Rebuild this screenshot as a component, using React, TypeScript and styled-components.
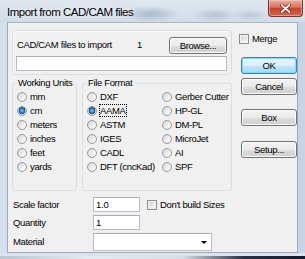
import styled, { createGlobalStyle } from "styled-components";

const GlobalStyle = createGlobalStyle`
  html, body {
    margin: 0;
    padding: 0;
  }
  body {
    width: 305px;
    height: 259px;
    overflow: hidden;
    font-family: "Liberation Sans", Arial, sans-serif;
    color: #000;
  }
  * {
    box-sizing: border-box;
  }
`;

const Window = styled.div`
  width: 305px;
  height: 259px;
  display: flex;
  flex-direction: column;
  background: linear-gradient(90deg, #d6e0eb 0%, #cdd8e5 50%, #c8d4e2 100%);
  overflow: hidden;
`;

const TitleBar = styled.div`
  height: 22px;
  display: flex;
  align-items: flex-start;
  padding-left: 7px;
  background:
    radial-gradient(ellipse 30px 8px at 150px 14px, rgba(120, 140, 165, 0.45), transparent),
    radial-gradient(ellipse 22px 7px at 215px 15px, rgba(130, 145, 165, 0.35), transparent),
    radial-gradient(ellipse 18px 6px at 250px 15px, rgba(130, 145, 165, 0.3), transparent),
    linear-gradient(180deg, #dfe7f0 0%, #d2dce8 100%);
`;

const Title = styled.span`
  font-size: 11.5px;
  letter-spacing: -0.5px;
  line-height: 24px;
  text-shadow: 0 0 5px rgba(255, 255, 255, 0.95);
`;

const CloseButton = styled.div`
  margin-left: auto;
  margin-right: 2px;
  width: 35px;
  height: 17px;
  border: 1px solid #7e3428;
  border-top: none;
  border-radius: 0 0 4px 4px;
  background: linear-gradient(180deg, #eab0a2 0%, #d9745f 45%, #c4432c 52%, #d06a4c 100%);
  box-shadow: inset 0 0 0 1px rgba(255, 220, 210, 0.45);
  display: flex;
  align-items: center;
  justify-content: center;
`;

const Client = styled.div`
  margin: 0 7px;
  height: 231px;
  background: #f0f0f0;
  border: 1px solid #9aa9bc;
  border-top-color: #aab7c6;
  display: grid;
  grid-template-columns: 226px 1fr;
  padding: 7px 0 0 4px;
`;

const BottomEdge = styled.div`
  height: 3px;
  background: #dbe3ec;
`;

const Backdrop = styled.div`
  height: 3px;
  background: linear-gradient(90deg, #b9c5d2 0%, #e6ebf0 30%, #d7dde4 60%, #2a3045 80%, #161a2a 100%);
`;

const MainColumn = styled.div`
  display: flex;
  flex-direction: column;
`;

const SideColumn = styled.div`
  display: flex;
  flex-direction: column;
  align-items: flex-start;
`;

const FilesGroup = styled.div`
  width: 220px;
  height: 45px;
  border: 1px solid #d5dfe5;
  border-radius: 3px;
  box-shadow: inset 1px 1px 0 #fff;
  padding: 6px 4px 0 3px;
`;

const FilesRow = styled.div`
  height: 16px;
  display: flex;
  align-items: center;
`;

const Text = styled.span`
  font-size: 9.5px;
  letter-spacing: -0.35px;
  line-height: 12px;
  white-space: nowrap;
`;

const FilesLabel = styled(Text)`
  width: 120px;
  margin-left: 1px;
`;

const Button = styled.button<{ $primary?: boolean; $width: number }>`
  width: ${(p) => p.$width}px;
  height: 17px;
  padding: 0;
  font-family: inherit;
  font-size: 9.5px;
  letter-spacing: -0.35px;
  color: #000;
  border: 1px solid ${(p) => (p.$primary ? "#3c7fb1" : "#707070")};
  border-radius: 3px;
  background: ${(p) =>
    p.$primary
      ? "linear-gradient(180deg, #eaf6fd 0%, #d9f0fc 50%, #bee6fd 51%, #a7d9f5 100%)"
      : "linear-gradient(180deg, #f2f2f2 0%, #ebebeb 50%, #dddddd 51%, #cfcfcf 100%)"};
  box-shadow: inset 0 0 0 1px ${(p) => (p.$primary ? "#7fdcfc" : "#fcfcfc")};
  display: flex;
  align-items: center;
  justify-content: center;
`;

const BrowseButton = styled(Button)`
  margin-left: auto;
`;

const SideButton = styled(Button)<{ $gap: number }>`
  margin-top: ${(p) => p.$gap}px;
  margin-left: 3px;
`;

const TextBox = styled.div<{ $width: number; $height?: number }>`
  width: ${(p) => p.$width}px;
  height: ${(p) => p.$height ?? 15}px;
  background: #fff;
  border: 1px solid #b4bcc5;
  border-top-color: #abadb3;
  padding-left: 2px;
  display: flex;
  align-items: center;
  font-size: 9.5px;
  letter-spacing: -0.2px;
`;

const PathBox = styled(TextBox)`
  margin-top: 3px;
`;

const GroupsRow = styled.div`
  display: flex;
  gap: 5px;
  margin-top: 2px;
`;

const Group = styled.fieldset<{ $width: number }>`
  margin: 0;
  width: ${(p) => p.$width}px;
  height: 114px;
  padding: 1px 0 0 4px;
  border: 1px solid #d5dfe5;
  border-radius: 3px;
  min-width: 0;
`;

const Legend = styled.legend`
  font-size: 9.5px;
  letter-spacing: -0.35px;
  line-height: 12px;
  padding: 0 1px;
  white-space: nowrap;
`;

const OptionGrid = styled.div<{ $cols: number }>`
  display: grid;
  grid-template-columns: ${(p) => (p.$cols === 2 ? "75px 1fr" : "1fr")};
  grid-template-rows: repeat(6, 14px);
  grid-auto-flow: column;
`;

const Option = styled.div`
  display: flex;
  align-items: center;
  gap: 3px;
`;

const Radio = styled.span<{ $checked?: boolean }>`
  width: 10px;
  height: 10px;
  flex: none;
  border-radius: 50%;
  border: 1px solid #989898;
  background: ${(p) =>
    p.$checked
      ? "radial-gradient(circle at 50% 45%, #7fc6f4 0%, #2a7fcf 35%, #0e4f8e 55%, #e9e9e9 62%, #fafafa 100%)"
      : "linear-gradient(135deg, #d4d4d4 0%, #f0f0f0 60%, #ffffff 100%)"};
`;

const Focused = styled.span`
  outline: 1px dotted #000;
  outline-offset: 0;
`;

const Check = styled.span`
  width: 10px;
  height: 10px;
  flex: none;
  border: 1px solid #8f8f8f;
  background: linear-gradient(135deg, #cfcfcf 0%, #ececec 60%, #ffffff 100%);
  box-shadow: inset 0 0 0 1px #f4f4f4;
`;

const CheckRow = styled.label<{ $offset: number }>`
  display: flex;
  align-items: center;
  gap: 3px;
  margin-left: ${(p) => p.$offset}px;
`;

const MergeRow = styled(CheckRow)`
  margin-top: 3px;
  height: 11px;
`;

const Form = styled.div`
  margin-top: 6px;
  display: flex;
  flex-direction: column;
  gap: 3px;
  padding-left: 1px;
`;

const FormRow = styled.div`
  display: grid;
  grid-template-columns: 80px auto 1fr;
  align-items: center;
`;

const SelectArrow = styled.span`
  margin-left: auto;
  margin-right: 4px;
  width: 0;
  height: 0;
  border-left: 3px solid transparent;
  border-right: 3px solid transparent;
  border-top: 3px solid #000;
`;

const units = ["mm", "cm", "meters", "inches", "feet", "yards"];
const formats = [
  "DXF",
  "AAMA",
  "ASTM",
  "IGES",
  "CADL",
  "DFT (cncKad)",
  "Gerber Cutter",
  "HP-GL",
  "DM-PL",
  "MicroJet",
  "AI",
  "SPF",
];

function CloseIcon() {
  return (
    <svg width="11" height="9" viewBox="0 0 11 9">
      <path d="M1.5 1 L9.5 8 M9.5 1 L1.5 8" stroke="#5a1f16" strokeWidth="3.2" strokeLinecap="round" />
      <path d="M1.5 1 L9.5 8 M9.5 1 L1.5 8" stroke="#fff" strokeWidth="1.8" strokeLinecap="round" />
    </svg>
  );
}

export default function App() {
  return (
    <Window>
      <GlobalStyle />
      <TitleBar>
        <Title>Import from CAD/CAM files</Title>
        <CloseButton>
          <CloseIcon />
        </CloseButton>
      </TitleBar>
      <Client>
        <MainColumn>
          <FilesGroup>
            <FilesRow>
              <FilesLabel>CAD/CAM files to import</FilesLabel>
              <Text>1</Text>
              <BrowseButton $width={58}>Browse...</BrowseButton>
            </FilesRow>
            <PathBox $width={211} />
          </FilesGroup>
          <GroupsRow>
            <Group $width={65}>
              <Legend>Working Units</Legend>
              <OptionGrid $cols={1}>
                {units.map((u) => (
                  <Option key={u}>
                    <Radio $checked={u === "cm"} />
                    <Text>{u}</Text>
                  </Option>
                ))}
              </OptionGrid>
            </Group>
            <Group $width={150}>
              <Legend>File Format</Legend>
              <OptionGrid $cols={2}>
                {formats.map((f) => (
                  <Option key={f}>
                    <Radio $checked={f === "AAMA"} />
                    <Text>{f === "AAMA" ? <Focused>{f}</Focused> : f}</Text>
                  </Option>
                ))}
              </OptionGrid>
            </Group>
          </GroupsRow>
          <Form>
            <FormRow>
              <Text>Scale factor</Text>
              <TextBox $width={47}>1.0</TextBox>
              <CheckRow $offset={7}>
                <Check />
                <Text>Don't build Sizes</Text>
              </CheckRow>
            </FormRow>
            <FormRow>
              <Text>Quantity</Text>
              <TextBox $width={47}>1</TextBox>
            </FormRow>
            <FormRow>
              <Text>Material</Text>
              <TextBox $width={119} $height={18}>
                <SelectArrow />
              </TextBox>
            </FormRow>
          </Form>
        </MainColumn>
        <SideColumn>
          <MergeRow $offset={1}>
            <Check />
            <Text>Merge</Text>
          </MergeRow>
          <SideButton $primary $width={56} $gap={13}>OK</SideButton>
          <SideButton $width={56} $gap={4}>Cancel</SideButton>
          <SideButton $width={56} $gap={14}>Box</SideButton>
          <SideButton $width={56} $gap={15}>Setup...</SideButton>
        </SideColumn>
      </Client>
      <BottomEdge />
      <Backdrop />
    </Window>
  );
}
